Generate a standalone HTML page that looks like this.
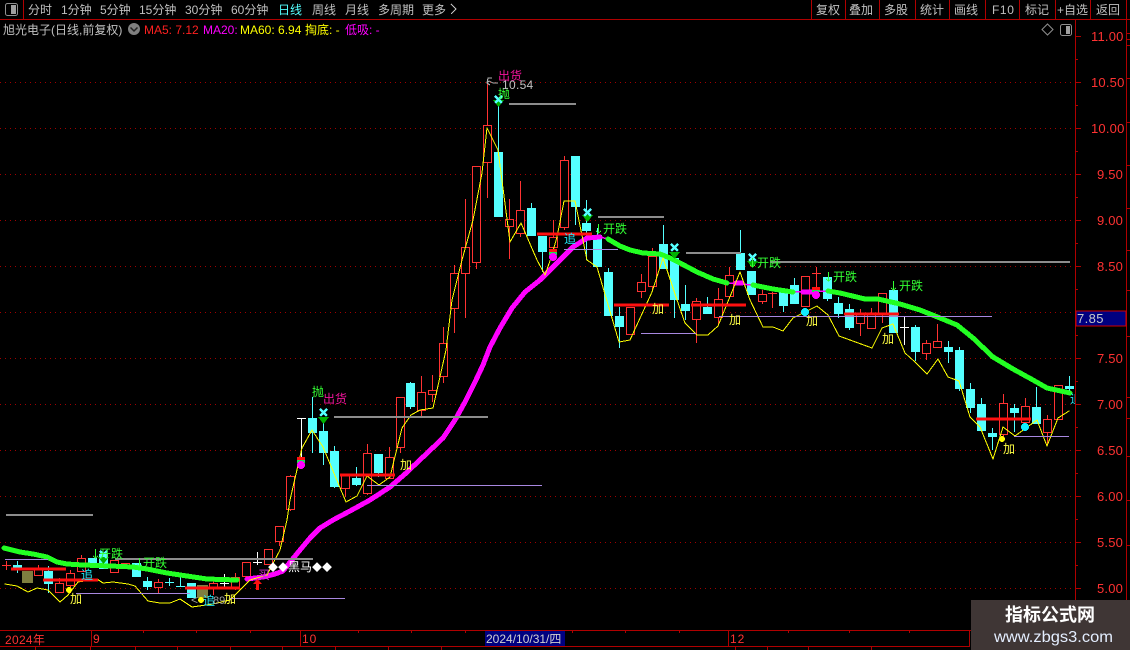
<!DOCTYPE html>
<html><head><meta charset="utf-8"><style>
html,body{margin:0;padding:0;background:#000;width:1130px;height:650px;overflow:hidden}
svg{display:block}
text{font-family:"Liberation Sans","WenQuanYi Zen Hei","Noto Sans CJK SC",sans-serif;font-size:12px}
</style></head><body>
<svg width="1130" height="650" viewBox="0 0 1130 650" xmlns="http://www.w3.org/2000/svg">
<rect width="1130" height="650" fill="#000"/>
<!-- grid -->
<g stroke="#a00000" stroke-width="1" stroke-dasharray="1 4" shape-rendering="crispEdges">
<path d="M0 82.5H1075M0 128.5H1075M0 174.5H1075M0 220.5H1075M0 266.5H1075M0 312.5H1075M0 358.5H1075M0 404.5H1075M0 450.5H1075M0 496.5H1075M0 542.5H1075M0 588.5H1075"/>
</g>
<!-- frame -->
<g stroke="#b00000" stroke-width="1" fill="none" shape-rendering="crispEdges">
<path d="M0 19.5H1130M23.5 0V19M811.5 0V19M845.5 0V19M879.5 0V19M915.5 0V19M949.5 0V19M985.5 0V19M1019.5 0V19M1055.5 0V19M1090.5 0V19M1126.5 0V650M1075.5 19V630"/>
<path d="M0 630.5H1075M0 646.5H970M91.5 630V646M300.5 630V646M728.5 630V646M969.5 630V646M143.5 630V633M196.5 630V633M250.5 630V633M358.5 630V633M411.5 630V633M465.5 630V633M572.5 630V633M625.5 630V633M679.5 630V633M788.5 630V633M849.5 630V633M909.5 630V633M35.5 646V650M90.5 646V650M135.5 646V650M177.5 646V650M230.5 646V650M282.5 646V650M335.5 646V650M388.5 646V650M441.5 646V650M735.5 646V650M767.5 646V650M808.5 646V650M871.5 646V650"/>
<path d="M1075 36.5H1081M1075 59.5H1078M1075 82.5H1081M1075 105.5H1078M1075 128.5H1081M1075 151.5H1078M1075 174.5H1081M1075 197.5H1078M1075 220.5H1081M1075 243.5H1078M1075 266.5H1081M1075 289.5H1078M1075 335.5H1078M1075 358.5H1081M1075 381.5H1078M1075 404.5H1081M1075 427.5H1078M1075 450.5H1081M1075 473.5H1078M1075 496.5H1081M1075 519.5H1078M1075 542.5H1081M1075 565.5H1078M1075 588.5H1081M1075 611.5H1078"/>
<path d="M1126 33.5H1130M1126 39.5H1130M1126 45.5H1130M1126 78.5H1130M1126 122.5H1130M1126 165.5H1130M1126 208.5H1130M1126 250.5H1130M1126 290.5H1130M1126 336.5H1130M1126 397.5H1130M1126 418.5H1130M1126 456.5H1130M1126 500.5H1130M1126 545.5H1130"/>
</g>
<!-- axis labels -->
<g fill="#ff3232" style="letter-spacing:.2px">
<text x="1091" y="41" style="font-size:13px">11.00</text><text x="1091" y="87" style="font-size:13px">10.50</text><text x="1091" y="133" style="font-size:13px">10.00</text><text x="1097" y="179" style="font-size:13px">9.50</text><text x="1097" y="225" style="font-size:13px">9.00</text><text x="1097" y="271" style="font-size:13px">8.50</text><text x="1097" y="363" style="font-size:13px">7.50</text><text x="1097" y="409" style="font-size:13px">7.00</text><text x="1097" y="455" style="font-size:13px">6.50</text><text x="1097" y="501" style="font-size:13px">6.00</text><text x="1097" y="547" style="font-size:13px">5.50</text><text x="1097" y="593" style="font-size:13px">5.00</text>
</g>
<rect x="1076" y="311" width="50" height="15" fill="#000080" stroke="#d00000" shape-rendering="crispEdges"/>
<text x="1077" y="323" fill="#c8c8c8" style="letter-spacing:.4px;font-size:13px">7.85</text>
<!-- red wicks -->
<path fill="none" stroke="#ff3232" shape-rendering="crispEdges" d="M6.5 561V570M2 565.5H11M38.5 565V575M59.5 578V592M70.5 570V593M81.5 555V571M158.5 579V593M213.5 580V595M235.5 573V590M279.5 541V546M290.5 475V511M345.5 488V497M367.5 444V495M389.5 447V478M400.5 447V453M421.5 376V416M432.5 375V402M443.5 327V383M454.5 265V333M465.5 199V318M476.5 262V269M487.5 80V198M509.5 199V259M520.5 181V237M553.5 220V260M564.5 156V230M641.5 274V298M652.5 248V290M696.5 298V343M718.5 288V325M729.5 267V296M762.5 290V304M772.5 292V308M768 293.5H777M816.5 267V294M812 273.5H821M860.5 309V336M871.5 308V328M882.5 313V323M926.5 340V360M937.5 324V347M1003.5 394V438M1025.5 398V422M1047.5 415V445"/>
<!-- red bodies -->
<g fill="#000" stroke="#ff3232" shape-rendering="crispEdges">
<rect x="34.5" y="568.5" width="8" height="7"/><rect x="55.5" y="583.5" width="8" height="9"/><rect x="66.5" y="573.5" width="8" height="12"/><rect x="77.5" y="558.5" width="8" height="13"/><rect x="110.5" y="560.5" width="8" height="12"/><rect x="121.5" y="563.5" width="8" height="5"/><rect x="154.5" y="582.5" width="8" height="5"/><rect x="209.5" y="583.5" width="8" height="4"/><rect x="231.5" y="577.5" width="8" height="10"/><rect x="242.5" y="562.5" width="8" height="14"/><rect x="264.5" y="549.5" width="8" height="15"/><rect x="275.5" y="526.5" width="8" height="15"/><rect x="286.5" y="476.5" width="8" height="33"/><rect x="341.5" y="475.5" width="8" height="13"/><rect x="363.5" y="453.5" width="8" height="40"/><rect x="385.5" y="457.5" width="8" height="21"/><rect x="396.5" y="397.5" width="8" height="50"/><rect x="417.5" y="392.5" width="8" height="18"/><rect x="428.5" y="390.5" width="8" height="4"/><rect x="439.5" y="343.5" width="8" height="33"/><rect x="450.5" y="273.5" width="8" height="35"/><rect x="461.5" y="247.5" width="8" height="26"/><rect x="472.5" y="166.5" width="8" height="96"/><rect x="483.5" y="125.5" width="8" height="37"/><rect x="505.5" y="219.5" width="8" height="7"/><rect x="516.5" y="210.5" width="8" height="23"/><rect x="549.5" y="237.5" width="8" height="10"/><rect x="560.5" y="160.5" width="8" height="67"/><rect x="626.5" y="307.5" width="8" height="27"/><rect x="637.5" y="282.5" width="8" height="9"/><rect x="648.5" y="256.5" width="8" height="30"/><rect x="692.5" y="301.5" width="8" height="18"/><rect x="714.5" y="299.5" width="8" height="18"/><rect x="725.5" y="275.5" width="8" height="21"/><rect x="758.5" y="294.5" width="8" height="7"/><rect x="801.5" y="276.5" width="8" height="30"/><rect x="856.5" y="313.5" width="8" height="10"/><rect x="867.5" y="313.5" width="8" height="15"/><rect x="878.5" y="293.5" width="8" height="20"/><rect x="922.5" y="343.5" width="8" height="10"/><rect x="933.5" y="341.5" width="8" height="6"/><rect x="999.5" y="403.5" width="8" height="31"/><rect x="1021.5" y="406.5" width="8" height="16"/><rect x="1043.5" y="419.5" width="8" height="13"/><rect x="1054.5" y="385.5" width="8" height="34"/>
</g>
<!-- cyan wicks -->
<path fill="none" stroke="#54ffff" shape-rendering="crispEdges" d="M17.5 561V573M48.5 566V593M147.5 577V590M169.5 578V586M165 582.5H174M180.5 577V586M176 586.5H185M312.5 397V453M323.5 423V465M334.5 446V488M356.5 467V486M378.5 454V477M410.5 382V409M498.5 105V217M531.5 203V236M542.5 236V272M575.5 156V225M586.5 200V260M597.5 228V267M608.5 268V316M619.5 307V348M663.5 225V269M674.5 258V318M685.5 285V320M707.5 297V314M740.5 230V270M783.5 292V312M794.5 278V304M827.5 277V301M838.5 297V318M849.5 304V330M893.5 283V333M948.5 341V363M915.5 325V361M959.5 347V391M970.5 383V413M981.5 398V431M992.5 428V450M1014.5 404V432M1036.5 387V424M1069.5 376V393"/>
<g fill="#54ffff" shape-rendering="crispEdges">
<rect x="13" y="565" width="9" height="4"/><rect x="44" y="571" width="9" height="13"/><rect x="88" y="558" width="9" height="7"/><rect x="99" y="554" width="9" height="15"/><rect x="132" y="563" width="9" height="14"/><rect x="143" y="581" width="9" height="6"/><rect x="187" y="583" width="9" height="15"/><rect x="308" y="418" width="9" height="15"/><rect x="319" y="431" width="9" height="22"/><rect x="330" y="451" width="9" height="36"/><rect x="352" y="478" width="9" height="7"/><rect x="374" y="454" width="9" height="19"/><rect x="406" y="383" width="9" height="24"/><rect x="494" y="152" width="9" height="65"/><rect x="527" y="208" width="9" height="28"/><rect x="538" y="236" width="9" height="16"/><rect x="571" y="156" width="9" height="51"/><rect x="582" y="223" width="9" height="8"/><rect x="593" y="235" width="9" height="32"/><rect x="604" y="272" width="9" height="44"/><rect x="615" y="316" width="9" height="11"/><rect x="659" y="244" width="9" height="25"/><rect x="670" y="258" width="9" height="42"/><rect x="681" y="304" width="9" height="7"/><rect x="703" y="307" width="9" height="7"/><rect x="736" y="253" width="9" height="17"/><rect x="747" y="271" width="9" height="24"/><rect x="779" y="292" width="9" height="14"/><rect x="790" y="285" width="9" height="19"/><rect x="823" y="277" width="9" height="22"/><rect x="834" y="303" width="9" height="11"/><rect x="845" y="309" width="9" height="19"/><rect x="889" y="290" width="9" height="43"/><rect x="911" y="327" width="9" height="25"/><rect x="944" y="347" width="9" height="5"/><rect x="955" y="350" width="9" height="39"/><rect x="966" y="389" width="9" height="19"/><rect x="977" y="404" width="9" height="27"/><rect x="988" y="433" width="9" height="4"/><rect x="1010" y="408" width="9" height="5"/><rect x="1032" y="407" width="9" height="17"/><rect x="1065" y="386" width="9" height="3"/>
</g>
<!-- white crosses -->
<path fill="none" stroke="#fff" shape-rendering="crispEdges" d="M224.5 574V587M220 583.5H229M257.5 552V565M253 562.5H262M301.5 418V457M297 418.5H306M904.5 317V345M900 327.5H909"/>
<!-- olive -->
<rect x="22" y="571" width="11" height="12" fill="#7f7f40"/><rect x="197" y="585" width="11" height="13" fill="#7f7f40"/>
<!-- MA thick -->
<g fill="none" stroke-linejoin="round" stroke-linecap="round" shape-rendering="crispEdges">
<path stroke="#ff00ff" stroke-width="1.5" d="M600 237L608 239M727 283L753 285M793 292L828 291"/>
<path stroke="#ff00ff" stroke-width="5" d="M247 579L263 577L275 574L283 571L291 561L300 550L310 538L320 528L333 520L350 511L370 500L390 487L405 474L423 457L443 438L455 420L465 402L475 382L483 365L490 347L500 328L512 308L525 292L540 280L552 268L563 257L573 247L587 238L600 237M736 283L742 283M803 292L812 292"/>
<path stroke="#22ff22" stroke-width="5" d="M4 548L20 552L33 554L47 557L57 562L67 564L83 565L110 566L133 567L147 569L167 573L187 576L207 579L237 580"/>
<path stroke="#22ff22" stroke-width="5" d="M608 239L620 246L630 250L643 253L660 254L670 258L680 263L697 272L713 279L727 283M753 285L773 289L793 292M828 291L840 293L865 299L878 299L900 304L920 310L940 318L957 325L973 338L993 357L1013 369L1033 380L1047 388L1070 393"/>
<!-- yellow -->
<path stroke="#ffff00" stroke-width="1" d="M5 584L17 586L28 592L37 588L48 590L60 602L68 595L78 582L97 579L103 583L113 582L128 584L135 586L148 601L160 603L170 603L180 599L192 607L213 604L230 600L250 580L267 575L280 550L287 520L290 500L302 448L312 430L323 447L346 502L357 496L367 476L379 485L390 477L402 428L411 415L420 410L433 408L446 350L452 300L462 260L473 220L482 173L487 128L498 150L510 242L521 223L537 260L545 275L551 258L557 237L564 201L575 201L587 260L597 267L619 342L630 340L652 292L663 258L677 300L685 323L697 335L708 335L718 326L740 272L750 300L763 327L773 327L783 331L793 318L817 306L828 315L839 336L872 348L882 328L893 324L905 353L915 362L927 374L938 359L948 377L959 381L970 417L980 427L993 459L1003 427L1015 436L1037 420L1047 446L1058 418L1069 411"/>
</g>
<!-- horizontal levels -->
<g shape-rendering="crispEdges">
<path stroke="#ff1010" stroke-width="3" fill="none" d="M11 569H66M43 580H98M185 588H240M340 475H395M537 234H592M614 305H669M691 305H746M844 314H899M976 419H1031"/>
<path stroke="#8c8c8c" stroke-width="2" fill="none" d="M6 515H93M115 559H313M334 417H488M509 104H576M598 217H664M686 253H741M770 262H1070"/>
<path stroke="#a888e0" stroke-width="1" fill="none" d="M5 559.5H48M76 593.5H190M230 598.5H345M367 485.5H542M564 249.5H618M641 333.5H696M719 316.5H992M1014 436.5H1069"/>
</g>
<!-- down arrows and X marks -->
<g fill="#00b000" shape-rendering="crispEdges">
<polygon points="98,557 109,557 103.5,564"/><polygon points="318,417 329,417 323.5,424"/><polygon points="493,100 504,100 498.5,107"/><polygon points="582,215 593,215 587.5,222"/><polygon points="669,252 680,252 674.5,259"/><polygon points="747,261 758,261 752.5,268"/>
</g>
<g fill="none" stroke="#54ffff" stroke-width="2.6" shape-rendering="crispEdges">
<path d="M100 551L107 558M107 551L100 558M320 409L327 416M327 409L320 416M495 96L502 103M502 96L495 103M584 209L591 216M591 209L584 216M671 244L678 251M678 244L671 251M749 254L756 261M756 254L749 261"/>
</g>
<!-- colored dots -->
<g shape-rendering="crispEdges">
<rect x="297" y="457" width="8" height="3" fill="#ff1010"/><rect x="297" y="460" width="8" height="3" fill="#22dd55"/><circle cx="301" cy="465" r="4" fill="#ff00ff"/>
<rect x="549" y="249" width="8" height="3" fill="#ff1010"/><rect x="549" y="252" width="8" height="3" fill="#22dd55"/><circle cx="553" cy="257" r="4" fill="#ff00ff"/>
<rect x="812" y="287" width="8" height="3" fill="#ff1010"/><rect x="812" y="290" width="8" height="2" fill="#22dd55"/><circle cx="816" cy="295" r="4" fill="#ff00ff"/>
<circle cx="805" cy="312" r="4" fill="#11eeff"/><circle cx="1025" cy="427" r="4" fill="#11eeff"/>
<circle cx="69" cy="590" r="3" fill="#ffff00"/><circle cx="201" cy="600" r="3" fill="#ffff00"/><circle cx="1002" cy="439" r="3" fill="#ffff00"/>
</g>
<!-- red buy arrow -->
<polygon points="253,584 262,584 257.5,579" fill="#ff1010"/><rect x="256" y="584" width="3" height="6" fill="#ff1010"/>
<!-- text labels -->
<path fill="none" stroke="#33ff33" shape-rendering="crispEdges" d="M95.5 549V558M93 556L95.5 558L98 556M139.5 558V567M137 565L139.5 567L142 565M598.5 224V233M596 231L598.5 233L601 231M752.5 258V267M750 265L752.5 267L755 265M828.5 272V281M826 279L828.5 281L831 279M893.5 281V290M891 288L893.5 290L896 288"/>
<g fill="#33ff33">
<text x="99" y="558">开跌</text><text x="143" y="567">开跌</text><text x="603" y="233">开跌</text><text x="757" y="267">开跌</text><text x="833" y="281">开跌</text><text x="899" y="290">开跌</text>
<text x="312" y="396">抛</text><text x="498" y="98">抛</text>
</g>
<g fill="#f0149a"><text x="323" y="403">出货</text><text x="498" y="80">出货</text></g>
<text x="502" y="89" fill="#c0c0c0" style="letter-spacing:.3px">10.54</text>
<path d="M498 83L493 83L489 81L487 83L490 85M487 83L488 78L492 78" fill="none" stroke="#b0b0b0" shape-rendering="crispEdges"/>
<g fill="#ffff44">
<text x="70" y="603">加</text><text x="224" y="603">加</text><text x="400" y="469">加</text><text x="652" y="313">加</text><text x="729" y="324">加</text><text x="806" y="325">加</text><text x="882" y="343">加</text><text x="1003" y="453">加</text>
</g>
<g fill="#22eeff">
<text x="81" y="579">追</text><text x="203" y="605">追</text><text x="564" y="243">追</text>
</g>
<svg x="1000" y="380" width="75" height="30"><text x="70" y="23" fill="#22eeff">追</text></svg>
<text x="191" y="604" fill="#a0a0a0">&lt;</text><text x="213" y="604" fill="#a0a0a0" style="font-size:11px">89</text>
<text x="258" y="579" fill="#d030d0">买</text>
<text x="268" y="571" fill="#fff" style="font-size:10px">◆◆</text><text x="288" y="571" fill="#fff">黑马</text><text x="312" y="571" fill="#fff" style="font-size:10px">◆◆</text>
<!-- top menu -->
<g fill="#c0c0c0">
<text x="28" y="14">分时</text><text x="61" y="14">1分钟</text><text x="100" y="14">5分钟</text><text x="139" y="14">15分钟</text><text x="185" y="14">30分钟</text><text x="231" y="14">60分钟</text><text x="278" y="14" fill="#54ffff">日线</text><text x="312" y="14">周线</text><text x="345" y="14">月线</text><text x="378" y="14">多周期</text><text x="422" y="14">更多</text>
<text x="816" y="14">复权</text><text x="849" y="14">叠加</text><text x="884" y="14">多股</text><text x="920" y="14">统计</text><text x="954" y="14">画线</text><text x="992" y="14" style="letter-spacing:.6px">F10</text><text x="1025" y="14">标记</text><text x="1057" y="14">+自选</text><text x="1096" y="14">返回</text>
<text x="3" y="34">旭光电子(日线,前复权)</text>
</g>
<path d="M451 4L456 9L451 14" fill="none" stroke="#c0c0c0" shape-rendering="crispEdges"/>
<text x="144" y="34" fill="#ff2020">MA5: 7.12</text>
<text x="203" y="34" fill="#ff00ff">MA20:</text>
<text x="240" y="34" fill="#ffff00">MA60: 6.94</text>
<text x="305" y="34" fill="#ffff00">掏底: -</text>
<text x="345" y="34" fill="#ff00ff">低吸: -</text>
<!-- small icons -->
<circle cx="134" cy="29" r="6" fill="#808080"/><path d="M130.5 27.5L134 31L137.5 27.5" fill="none" stroke="#222" stroke-width="1.5"/>
<rect x="5.5" y="3.5" width="12" height="12" rx="2" fill="#000" stroke="#909090"/><rect x="11" y="5" width="5" height="9" fill="#a0a0a0"/>
<rect x="1060.5" y="24.5" width="11" height="11" rx="2" fill="#000" stroke="#909090"/><rect x="1066" y="26" width="4" height="8" fill="#a0a0a0"/>
<path d="M1047.5 24L1053 29.5L1047.5 35L1042 29.5Z" fill="none" stroke="#909090"/>
<!-- bottom axis labels -->
<text x="5" y="644" fill="#ff3232" style="letter-spacing:.3px">2024年</text>
<text x="93" y="643" fill="#ff3232">9</text>
<text x="302" y="643" fill="#ff3232" style="letter-spacing:1px">10</text>
<text x="730" y="643" fill="#ff3232" style="letter-spacing:1px">12</text>
<rect x="485" y="631" width="80" height="15" fill="#000080"/>
<text x="486" y="643" fill="#d0d0d0">2024/10/31/四</text>
<!-- watermark -->
<rect x="971" y="600" width="159" height="50" fill="#3f3635"/>
<text x="1050" y="621" text-anchor="middle" fill="#fff" style="font-family:'Noto Sans CJK SC',sans-serif;font-size:18px;font-weight:700">指标公式网</text>
<text x="994" y="642" fill="#e4eeff" textLength="119" lengthAdjust="spacingAndGlyphs" style="font-size:16px">www.zbgs3.com</text>
</svg>
</body></html>
